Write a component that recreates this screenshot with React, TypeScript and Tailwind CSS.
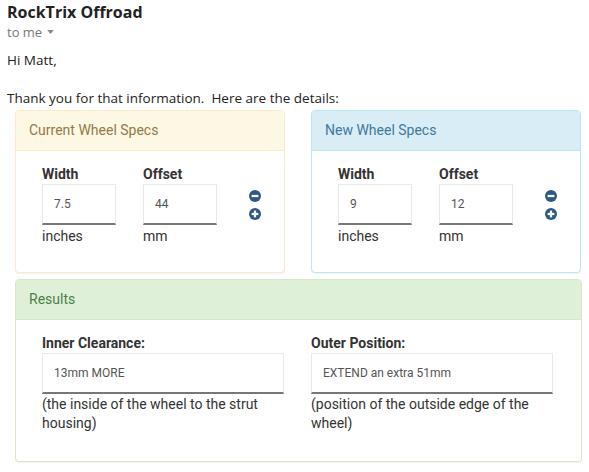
import React from 'react';

const MinusCircle = () => (
    <svg viewBox="0 0 16 16" className="h-[12px] w-[12px]">
        <circle cx="8" cy="8" r="8" fill="#2c5987" />
        <rect x="3.5" y="6.5" width="9" height="3" fill="#fff" />
    </svg>
);

const PlusCircle = () => (
    <svg viewBox="0 0 16 16" className="h-[12px] w-[12px]">
        <circle cx="8" cy="8" r="8" fill="#2c5987" />
        <rect x="3.5" y="6.5" width="9" height="3" fill="#fff" />
        <rect x="6.5" y="3.5" width="3" height="9" fill="#fff" />
    </svg>
);

const Field: React.FC<{ label: string; value: string; unit: string }> = ({ label, value, unit }) => (
    <div className="w-[74px]">
        <div className="text-[14px] font-bold text-[#333] leading-[18px] h-[18px]">{label}</div>
        <div className="mt-[1px] h-[41px] border border-[#eaeaea] border-b-[2px] border-b-[#777] bg-white flex items-center pl-[11px] text-[12px] text-[#555]">
            {value}
        </div>
        <div className="mt-[2px] text-[14px] text-[#333] leading-[18px]">{unit}</div>
    </div>
);

const SpecsPanel: React.FC<{
    title: string;
    tone: 'warning' | 'info';
    width: string;
    offset: string;
}> = ({ title, tone, width, offset }) => {
    const styles = {
        warning: { border: 'border-[#faebcc]', head: 'bg-[#fcf8e3] text-[#96784a] border-b-[#faebcc]' },
        info: { border: 'border-[#bce8f1]', head: 'bg-[#d9edf7] text-[#41789a] border-b-[#bce8f1]' },
    }[tone];

    return (
        <div className={`w-[270px] h-[163px] rounded-[4px] border bg-white shadow-[0_1px_1px_rgba(0,0,0,0.05)] ${styles.border}`}>
            <div className={`h-[40px] border-b rounded-t-[3px] flex items-center pl-[13px] text-[14px] ${styles.head}`}>
                {title}
            </div>
            <div className="flex pl-[26px] pt-[14px]">
                <Field label="Width" value={width} unit="inches" />
                <div className="w-[27px]" />
                <Field label="Offset" value={offset} unit="mm" />
                {/* stepper buttons */}
                <div className="ml-[32px] mt-[25px] flex flex-col gap-[6px]">
                    <MinusCircle />
                    <PlusCircle />
                </div>
            </div>
        </div>
    );
};

const ResultField: React.FC<{ label: string; value: string; note: string }> = ({ label, value, note }) => (
    <div className="w-[242px]">
        <div className="text-[14px] font-bold text-[#333] leading-[18px]">{label}</div>
        <div className="mt-[1px] h-[41px] border border-[#eaeaea] border-b-[2px] border-b-[#777] bg-white flex items-center pl-[11px] text-[12px] text-[#555]">
            {value}
        </div>
        <div className="mt-[1px] text-[14px] text-[#333] leading-[19px]">{note}</div>
    </div>
);

export default function App() {
    return (
        <div className="w-[589px] h-[472px] bg-white pl-[7px] font-['Roboto',sans-serif] text-[#222]">
            <div className="font-['Open_Sans','Noto_Sans',sans-serif]">
                <div className="pt-[2px] text-[16px] font-bold leading-[20px] text-[#222]">RockTrix Offroad</div>
                <div className="mt-[2px] flex items-center gap-[5px] text-[13px] leading-[16px] text-[#777]">
                    to me
                    <svg viewBox="0 0 8 5" className="w-[7px] h-[4px]"><path d="M0 0 L8 0 L4 5 Z" fill="#888" /></svg>
                </div>
                <div className="mt-[11px] text-[13.5px] leading-[18px]">Hi Matt,</div>
                <div className="mt-[20px] text-[13.5px] leading-[18px] whitespace-pre">Thank you for that information.  Here are the details:</div>
            </div>

            <div className="ml-[8px] mt-[3px] flex gap-[26px]">
                <SpecsPanel title="Current Wheel Specs" tone="warning" width="7.5" offset="44" />
                <SpecsPanel title="New Wheel Specs" tone="info" width="9" offset="12" />
            </div>

            <div className="ml-[8px] mt-[6px] w-[567px] h-[183px] rounded-[4px] border border-[#d6e9c6] bg-white shadow-[0_1px_1px_rgba(0,0,0,0.05)]">
                <div className="h-[40px] border-b border-b-[#d6e9c6] bg-[#dff0d8] rounded-t-[3px] flex items-center pl-[13px] text-[14px] text-[#4a7f4a]">
                    Results
                </div>
                <div className="flex pl-[26px] pt-[14px] gap-[27px]">
                    <ResultField
                        label="Inner Clearance:"
                        value="13mm MORE"
                        note="(the inside of the wheel to the strut housing)"
                    />
                    <ResultField
                        label="Outer Position:"
                        value="EXTEND an extra 51mm"
                        note="(position of the outside edge of the wheel)"
                    />
                </div>
            </div>
        </div>
    );
}
